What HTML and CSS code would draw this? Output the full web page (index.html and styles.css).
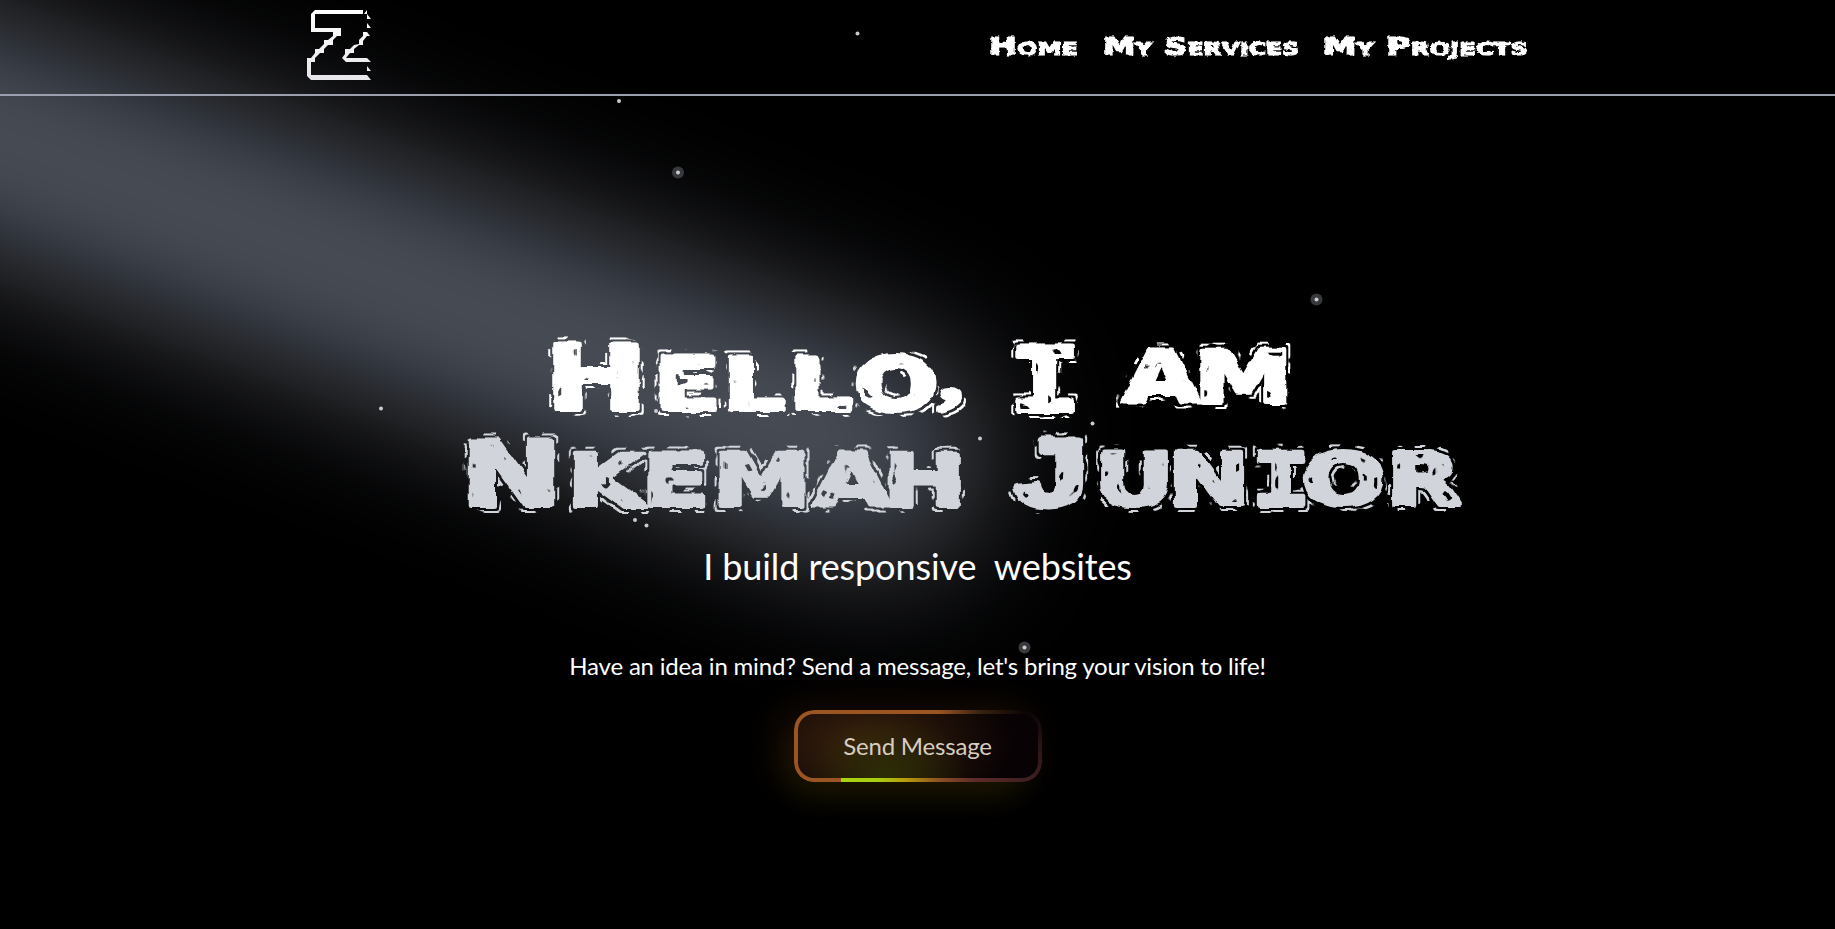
FILE: index.html
```html
<!DOCTYPE html>
<html lang="en">
<head>
<meta charset="utf-8">
<title>Nkemah Junior</title>
<link rel="stylesheet" href="styles.css">
</head>
<body>
<svg class="backdrop" viewBox="0 0 1835 929" aria-hidden="true">
  <defs>
    <filter id="beam" filterUnits="userSpaceOnUse" x="-600" y="-500" width="2400" height="1400" color-interpolation-filters="sRGB">
      <feGaussianBlur stdDeviation="80"/>
      <feComponentTransfer>
        <feFuncR type="table" tableValues="0 .02 .055 .09 .13 .16 .19 .23 .265 .29 .295"/>
        <feFuncG type="table" tableValues="0 .022 .057 .092 .134 .168 .205 .247 .282 .308 .312"/>
        <feFuncB type="table" tableValues="0 .026 .063 .1 .145 .187 .235 .277 .315 .338 .342"/>
      </feComponentTransfer>
    </filter>
    <filter id="rough" x="-5%" y="-20%" width="110%" height="140%" color-interpolation-filters="sRGB">
      <feTurbulence type="fractalNoise" baseFrequency=".22" numOctaves="2" seed="7" result="n"/>
      <feDisplacementMap in="SourceGraphic" in2="n" scale="4" xChannelSelector="R" yChannelSelector="G"/>
    </filter>
    <clipPath id="page"><rect width="1835" height="929"/></clipPath>
  </defs>
  <g clip-path="url(#page)">
    <g transform="translate(0 138) rotate(20)">
      <g filter="url(#beam)">
        <rect x="-600" y="-500" width="2400" height="1400" fill="#000"/>
        <rect x="-600" y="-108" width="1635" height="216" rx="60" fill="#fff"/>
      </g>
    </g>
  </g>
  <g class="stars">
    <circle cx="857.5" cy="33.5" r="2"/><circle cx="619" cy="101" r="2"/><circle cx="381" cy="408.500" r="2"/>
    <circle cx="656" cy="411" r="2"/><circle cx="1092.500" cy="423.500" r="2"/><circle cx="980" cy="438.500" r="2"/>
    <circle cx="635" cy="520" r="2"/><circle cx="646.500" cy="525.500" r="2"/>
  </g>
  <g class="halos">
    <circle cx="678" cy="172.500" r="6"/><circle cx="1316.500" cy="299.500" r="6"/><circle cx="1024.500" cy="647.500" r="6"/>
  </g>
  <g class="stars"><circle cx="678" cy="172.500" r="2"/><circle cx="1316.500" cy="299.500" r="2"/><circle cx="1024.500" cy="647.500" r="2"/></g>
</svg>

<header class="header">
  <svg class="logo" viewBox="303 8 70 74" aria-label="Z">
    <defs><linearGradient id="zg" gradientUnits="userSpaceOnUse" x1="0" y1="8" x2="0" y2="82"><stop offset="0" stop-color="#fff"/><stop offset="1" stop-color="#e5e5ea"/></linearGradient></defs>
    <path class="logo-fill" d="M315 10H363V14H315V28H341V36H337L333 40V45H328L324 49V53H320L315 58V62H311V75H367L371 80H311L307 76V58H311L315 53V49H319L324 44V40H328L333 36V32H311V14Z"/>
    <path class="logo-fill" d="M363 32H367L370 36H367L363 41V45H359L354 49V53H350L346 58H367L371 62H346L342 58L345 54V49H350L354 45L359 44V40L363 36Z"/>
    <path class="logo-fill" d="M364 14L367 10V14ZM367 14L371 19H367ZM367 23L371 28H367ZM367 66L371 71H367Z"/>
  </svg>
  <nav class="nav">
    <a href="#home"><svg class="navtext" width="89" height="30"><text x="1" y="23" textLength="89" lengthAdjust="spacingAndGlyphs">Home</text></svg></a>
    <a href="#services"><svg class="navtext" width="196" height="30"><text x="1" y="23" textLength="196" lengthAdjust="spacingAndGlyphs">My Services</text></svg></a>
    <a href="#projects"><svg class="navtext" width="205" height="30"><text x="0" y="23" textLength="205" lengthAdjust="spacingAndGlyphs">My Projects</text></svg></a>
  </nav>
</header>

<main class="hero">
  <h1 class="title">
    <svg class="title-art" viewBox="0 0 1040 200">
      <defs>
        <filter id="carved" filterUnits="userSpaceOnUse" x="-10" y="-10" width="1060" height="220" color-interpolation-filters="sRGB">
          <feTurbulence type="fractalNoise" baseFrequency=".07" numOctaves="2" seed="4" result="n"/>
          <feDisplacementMap in="SourceGraphic" in2="n" scale="6" xChannelSelector="R" yChannelSelector="G" result="body"/>
          <feTurbulence type="fractalNoise" baseFrequency=".07" numOctaves="1" seed="9" result="n2"/>
          <feColorMatrix in="n2" type="matrix" values="0 0 0 0 0  0 0 0 0 0  0 0 0 0 0  30 0 0 0 -15.8" result="outerMask"/>
          <feColorMatrix in="n2" type="matrix" values="0 0 0 0 0  0 0 0 0 0  0 0 0 0 0  0 30 0 0 -19.8" result="innerMask"/>
          <feMorphology in="body" operator="dilate" radius="4" result="d5"/>
          <feMorphology in="body" operator="dilate" radius="2" result="d3"/>
          <feComposite in="d5" in2="d3" operator="out" result="ring"/>
          <feComposite in="ring" in2="outerMask" operator="in" result="chips"/>
          <feMorphology in="body" operator="erode" radius="4" result="e4"/>
          <feMorphology in="body" operator="erode" radius="7" result="e6"/>
          <feComposite in="e4" in2="e6" operator="out" result="inner"/>
          <feComposite in="inner" in2="innerMask" operator="in" result="cuts"/>
          <feComposite in="body" in2="cuts" operator="out" result="carvedBody"/>
          <feMerge result="all"><feMergeNode in="chips"/><feMergeNode in="carvedBody"/></feMerge>
          <feGaussianBlur in="all" stdDeviation=".45"/>
        </filter>
      </defs>
      <g filter="url(#carved)" transform="translate(2 1)">
        <g transform="scale(1.36 1)">
          <text class="small white" y="71.500" x="75.500 155.400 206.200 255.100 302.500"><tspan class="big" y="79">H</tspan>ello<tspan class="comma" x="365" y="69">,</tspan></text>
          <text class="big mono white" y="81" x="416">I</text>
          <text class="small white" y="71.500" x="501 553">am</text>
          <text class="small grey" y="167" x="13.4 92.2 147 198.800 273 324.5"><tspan class="big" y="175">N</tspan>kemah</text>
          <text class="small grey" y="167" x="422 479.3 533.4 595 632 694"><tspan class="big jay" y="174">J</tspan>un<tspan class="mono">i</tspan>or</text>
        </g>
      </g>
    </svg>
  </h1>
  <p class="tagline">I build responsive  websites</p>
  <p class="pitch">Have an idea in mind? Send a message, let's bring your vision to life!</p>
  <button class="cta"><span>Send Message</span></button>
</main>
</body>
</html>
```
FILE: styles.css
```css
* { box-sizing: border-box; }
body {
  margin: 0;
  height: 929px;
  overflow: hidden;
  background: #000;
  color: #fff;
  font-family: Lato, sans-serif;
}
.backdrop { position: absolute; inset: 0; width: 1835px; height: 929px; z-index: -1; }
.stars { fill: #c9cbd0; }
.halos { fill: #38393c; }

.header {
  display: flex;
  justify-content: space-between;
  align-items: center;
  height: 96px;
  padding: 0 307px 0 303px;
  border-bottom: 2px solid #9b9fae;
}
.logo { width: 70px; height: 74px; margin-bottom: 4px; }
.logo-fill { fill: url(#zg); }
.nav { display: flex; gap: 25px; align-items: center; }
.nav a { display: block; height: 30px; color: #fff; }
.navtext { display: block; overflow: visible; }
.navtext text {
  font: 900 25px "DejaVu Sans", sans-serif;
  font-variant: small-caps;
  fill: #fff;
  stroke: #fff;
  stroke-width: 1.2px;
  filter: url(#rough);
}

.hero {
  display: flex;
  flex-direction: column;
  align-items: center;
  padding-top: 234px;
}
.title { margin: 0 0 0 85px; line-height: 0; }
.title-art { width: 1040px; height: 200px; overflow: visible; }
.title-art text { font-family: "DejaVu Sans", sans-serif; font-weight: 700; stroke-width: 4px; stroke-linejoin: round; }
.title-art .small { font-size: 104px; font-variant: small-caps; }
.title-art .big { font-size: 90px; }
.title-art .mono { font-family: "DejaVu Sans Mono", monospace; }
.title-art .comma { font-family: "Liberation Serif", serif; font-size: 72px; stroke-width: 4px; }
.title-art .jay { font-family: "Liberation Sans", sans-serif; font-size: 94px; stroke-width: 7px; }
.white { fill: #fff; stroke: #fff; }
.grey { fill: #d1d5db; stroke: #d1d5db; }

.tagline { margin: 12px 0 0; font-size: 36px; line-height: 48px; letter-spacing: -.1px; white-space: pre; }
.pitch { margin: 60px 0 0; font-size: 24px; line-height: 32px; letter-spacing: -.185px; }
.cta {
  position: relative;
  width: 248px;
  height: 72px;
  margin-top: 28px;
  padding: 0;
  border: 0;
  border-radius: 20px;
  color: #d8cdbf;
  font: 24px/32px Lato, sans-serif;
  letter-spacing: -.19px;
  background:
    radial-gradient(80px 60px at 38% 90%, #2c2e06, transparent),
    radial-gradient(150px 80px at 28% 45%, #3a210d, transparent),
    #080204;
  box-shadow: -14px 0 42px rgba(130, 65, 15, .24), -12px 22px 38px -8px rgba(80, 90, 0, .2);
}
.cta::before {
  content: "";
  position: absolute;
  inset: 0;
  padding: 4px;
  border-radius: 20px;
  background:
    linear-gradient(90deg, transparent 47px, #a6d413 47px, #a9cd12 84px, #b89a0c 112px, #8c5024 145px, #5e2c28 180px, #401f20 230px) 0 100% / 100% 5px no-repeat,
    linear-gradient(90deg, #9b5522 145px, #3a2310 185px, transparent 230px) 0 0 / 100% 36px no-repeat,
    linear-gradient(90deg, #9b5522 130px, transparent 200px) 0 100% / 100% 36px no-repeat,
    linear-gradient(#0a0404, #2a1415 50%, #401f20);
  -webkit-mask: linear-gradient(#000 0 0) content-box exclude, linear-gradient(#000 0 0);
  mask: linear-gradient(#000 0 0) content-box exclude, linear-gradient(#000 0 0);
}
```
